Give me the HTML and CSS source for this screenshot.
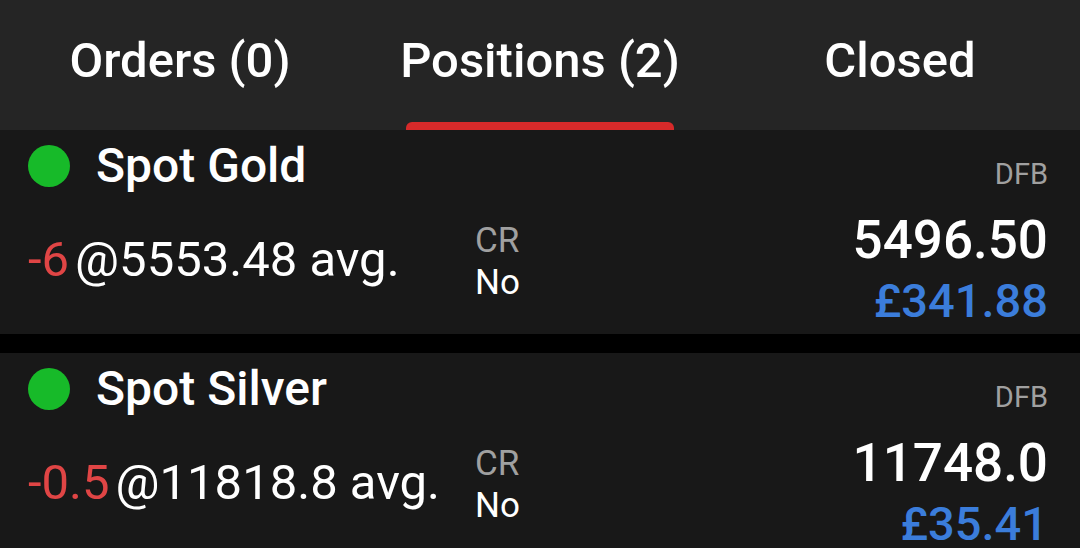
FILE: index.html
```html
<!DOCTYPE html>
<html>
<head>
<meta charset="utf-8">
<link rel="stylesheet" href="styles.css">
</head>
<body>
<div class="tabs">
  <div class="tab"><span class="tab-label">Orders (0)</span></div>
  <div class="tab active"><span class="tab-label">Positions (2)</span><div class="indicator"></div></div>
  <div class="tab"><span class="tab-label">Closed</span></div>
</div>
<div class="list">
  <div class="card">
    <div class="top-row">
      <span class="dot"></span>
      <span class="name">Spot Gold</span>
      <span class="type">DFB</span>
    </div>
    <div class="bottom-row">
      <div class="qty"><span class="neg">-6</span>@5553.48 avg.</div>
      <div class="cr"><div class="cr-label">CR</div><div class="cr-value">No</div></div>
      <div class="prices"><div class="price">5496.50</div><div class="pnl">£341.88</div></div>
    </div>
  </div>
  <div class="card">
    <div class="top-row">
      <span class="dot"></span>
      <span class="name">Spot Silver</span>
      <span class="type">DFB</span>
    </div>
    <div class="bottom-row">
      <div class="qty"><span class="neg">-0.5</span>@11818.8 avg.</div>
      <div class="cr"><div class="cr-label">CR</div><div class="cr-value">No</div></div>
      <div class="prices"><div class="price">11748.0</div><div class="pnl">£35.41</div></div>
    </div>
  </div>
</div>
</body>
</html>
```

FILE: styles.css
```css
* { box-sizing: border-box; }
html, body {
  margin: 0;
  padding: 0;
  background: #000;
  font-family: Roboto, "Noto Sans", sans-serif;
  color: #fff;
  overflow: hidden;
}
.tabs {
  display: grid;
  grid-template-columns: 1fr 1fr 1fr;
  height: 130px;
  background: #252525;
}
.tab {
  display: flex;
  flex-direction: column;
  align-items: center;
  justify-content: space-between;
}
.tab-label {
  font-size: 49px;
  font-weight: 500;
  line-height: 60px;
  margin-top: 31px;
  color: #fff;
}
.indicator {
  width: 268px;
  height: 8px;
  background: #d72a2a;
  border-radius: 6px 6px 0 0;
}
.list {
  display: flex;
  flex-direction: column;
  gap: 19px;
}
.card {
  background: #181818;
  height: 204px;
  padding: 0 32px 0 28px;
}
.top-row {
  display: flex;
  align-items: center;
  height: 72px;
}
.dot {
  width: 42px;
  height: 42px;
  border-radius: 50%;
  background: #17ba29;
  margin-right: 26px;
}
.name {
  font-size: 48px;
  font-weight: 500;
  line-height: 56px;
}
.type {
  margin-left: auto;
  font-size: 29px;
  color: #a0a0a0;
  line-height: 30px;
  margin-top: 16px;
}
.bottom-row {
  display: flex;
  align-items: flex-start;
}
.qty {
  width: 447px;
  font-size: 49px;
  line-height: 56px;
  margin-top: 30px;
  color: #fff;
}
.neg { color: #e04545; margin-right: 6px; }
.cr {
  font-size: 35px;
  line-height: 42px;
  margin-top: 18px;
}
.cr-label { color: #a0a0a0; }
.cr-value { color: #fff; }
.prices {
  margin-left: auto;
  text-align: right;
  margin-top: 10px;
}
.price {
  font-size: 53px;
  font-weight: 500;
  line-height: 56px;
}
.pnl {
  font-size: 47px;
  font-weight: 500;
  line-height: 59px;
  margin-top: 3px;
  color: #3b7ddb;
}
```
